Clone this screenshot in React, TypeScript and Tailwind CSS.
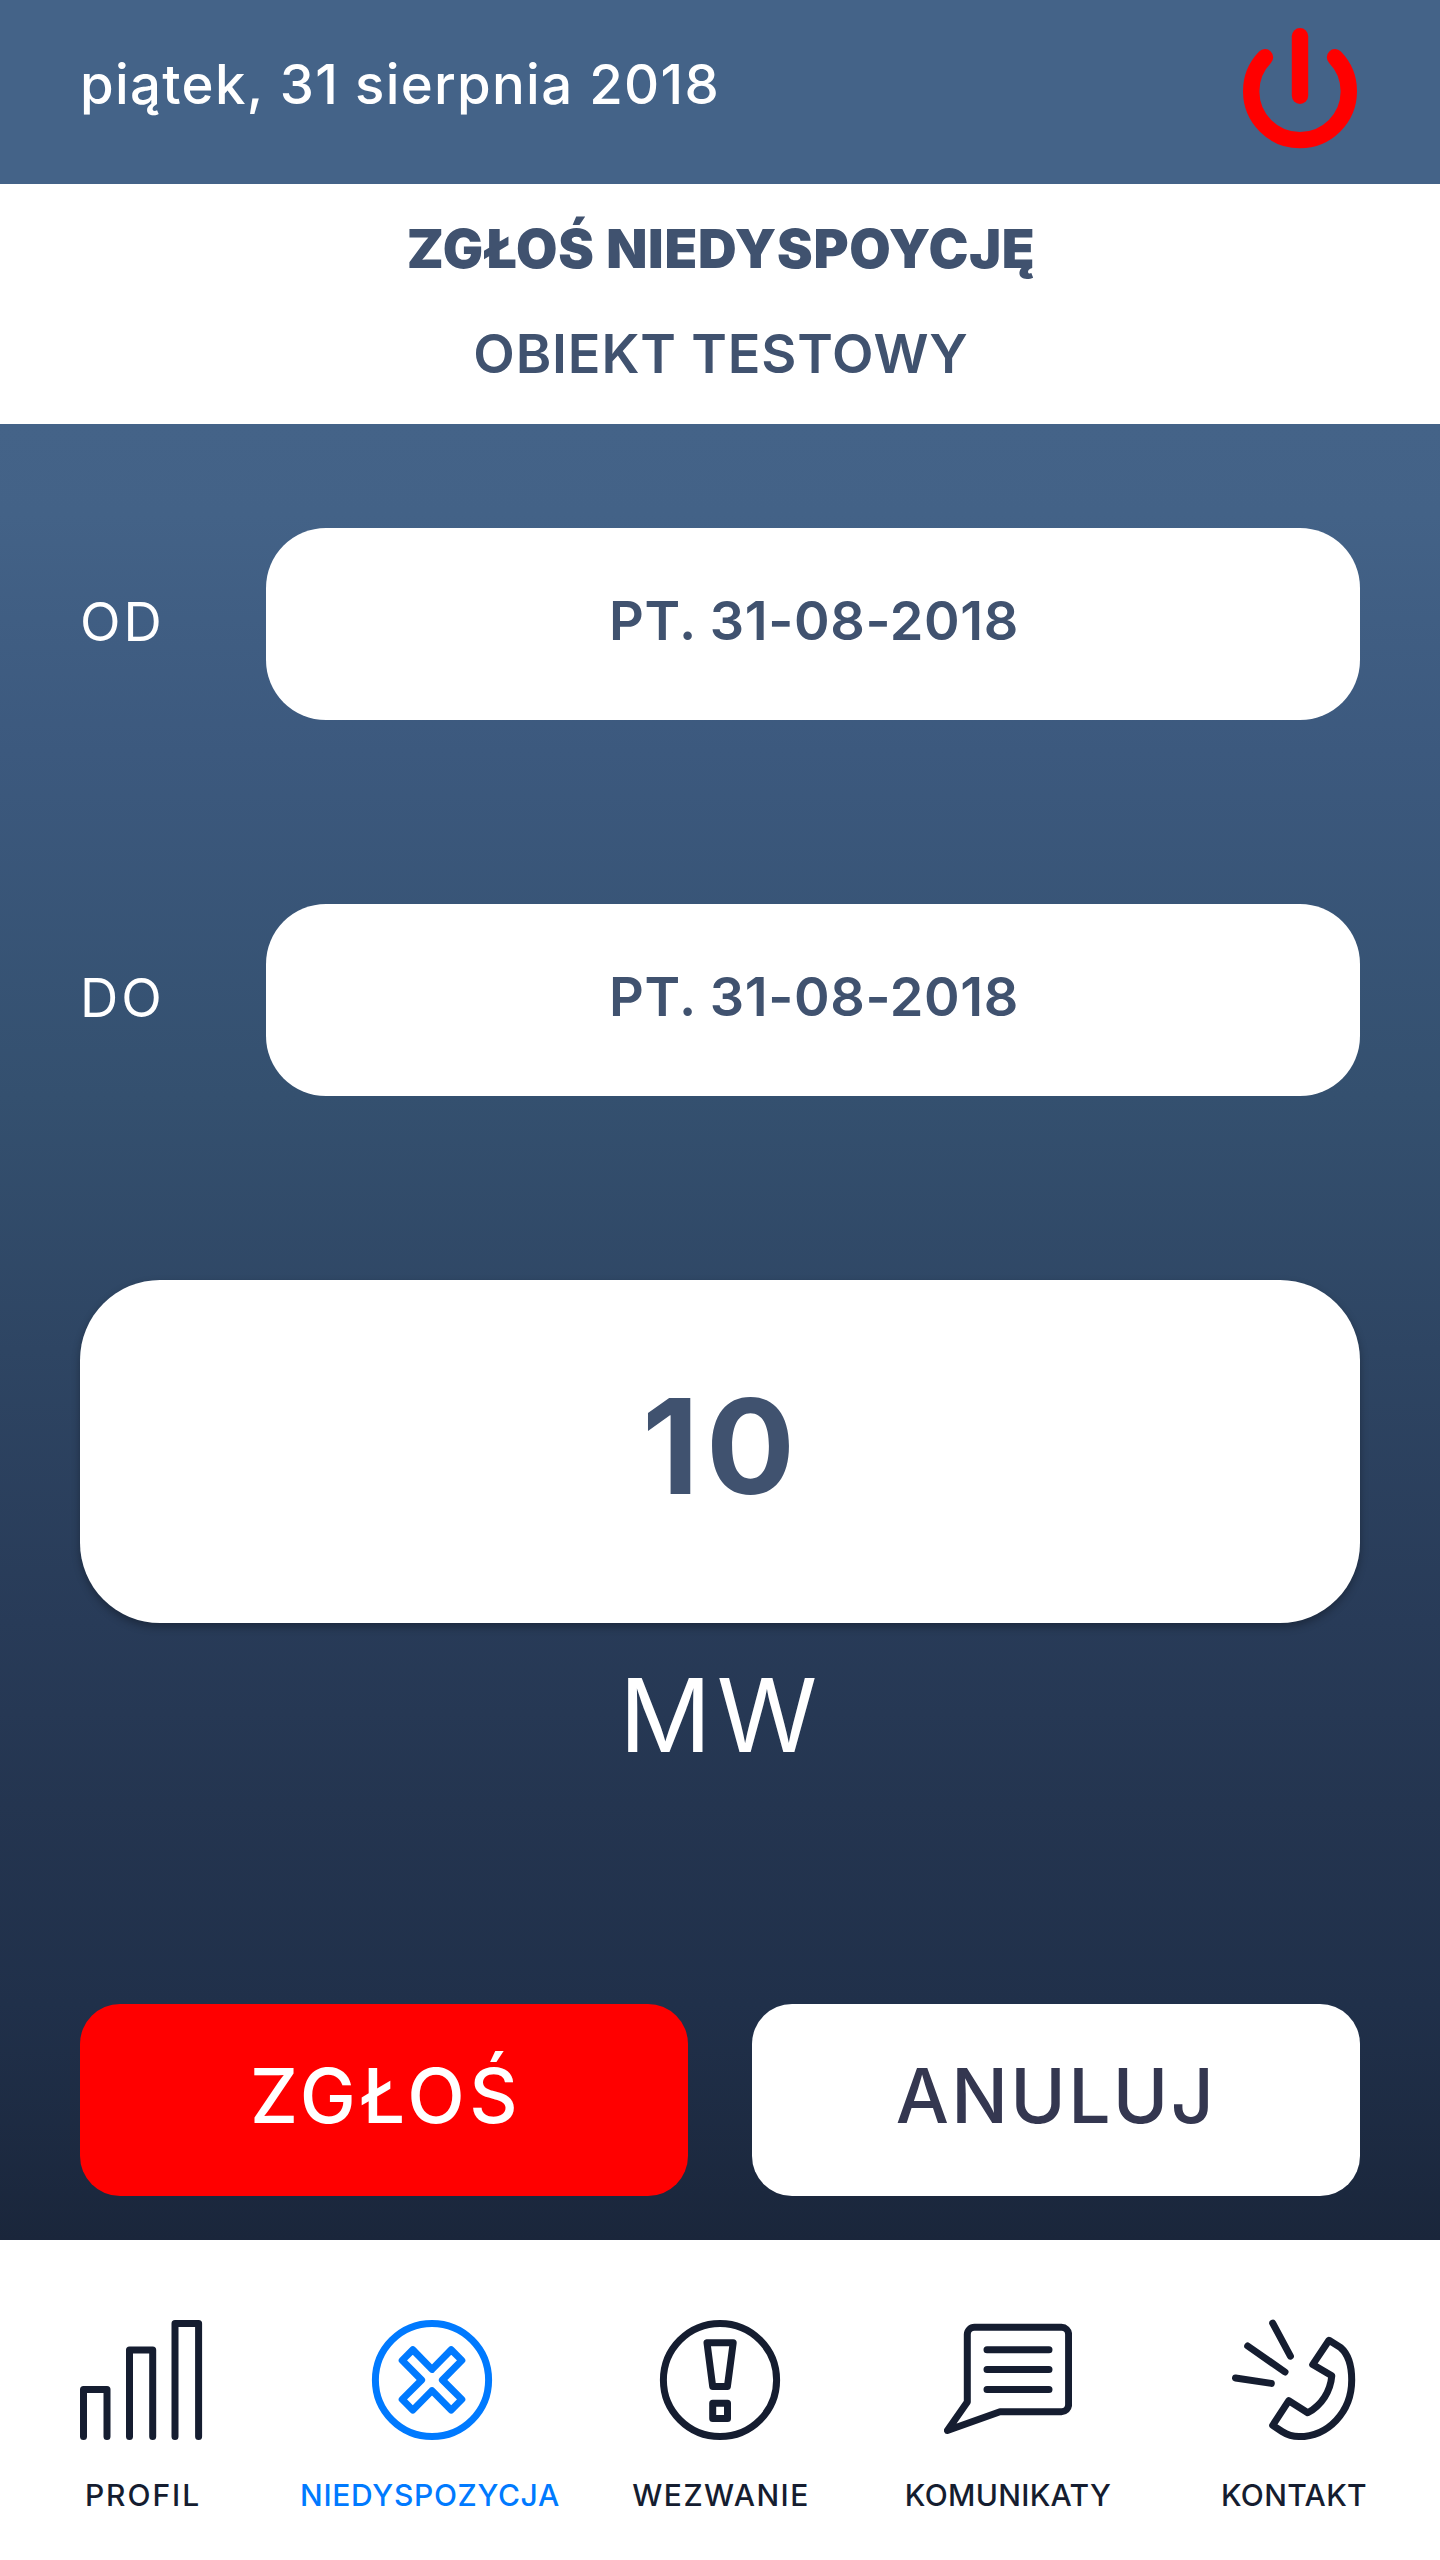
import React, { useState } from 'react';

const ICON_PROPS = {
    viewBox: '0 0 128 128',
    fill: 'none',
    stroke: 'currentColor',
    strokeWidth: 7,
    strokeLinecap: 'round' as const,
    strokeLinejoin: 'round' as const,
    className: 'w-32 h-32',
};

const PowerIcon: React.FC = () => (
    <svg viewBox="0 0 120 120" className="w-[120px] h-[120px] overflow-visible" fill="none" stroke="#ff0000" strokeWidth={16.4} strokeLinecap="round">
        <path d="M25 32.3A48.8 48.8 0 1 0 95 32.3" />
        <path d="M60 11.2V70.8" />
    </svg>
);

const ProfileIcon: React.FC = () => (
    <svg {...ICON_PROPS}>
        <path d="M3.5 120.5V73.6H27V120.5" />
        <path d="M49.5 120.5V34H72.7V120.5" />
        <path d="M95 120.5V7.5H118.6V120.5" />
    </svg>
);

const UnavailableIcon: React.FC = () => (
    <svg {...ICON_PROPS}>
        <circle cx="64" cy="64" r="56.6" />
        <path d="M44.8 33.7L64 53.4L83.2 33.7L93.8 44.4L74.4 64L93.8 83.4L83.2 94.1L64 74.6L44.8 94.1L34.2 83.4L53.6 64L34.2 44.4Z" />
    </svg>
);

const CallIcon: React.FC = () => (
    <svg {...ICON_PROPS}>
        <circle cx="64" cy="64" r="56.6" />
        <path d="M51 26.7H77.2L71.4 70.5H56.7Z" />
        <path d="M56.7 87.2H71.5V102.4H56.7Z" />
    </svg>
);

const MessagesIcon: React.FC = () => (
    <svg {...ICON_PROPS}>
        <path d="M23.3 86V18.5A7.2 7.2 0 0 1 30.5 11.3H117.5A7.2 7.2 0 0 1 124.6 18.5V88.5A7.2 7.2 0 0 1 117.5 95.7H56L3.4 114.5Z" />
        <path d="M43 33.7H105M43 53.5H105M43 73.4H105" />
    </svg>
);

const ContactIcon: React.FC = () => (
    <svg {...ICON_PROPS}>
        <path d="M40.7 7.2L58.4 40.2M15.7 30L53 56M3.5 62L39.3 67.4" />
        <path d="M97 24.3L80.7 48.6L99.8 59.8C98.5 75 90 89 75.7 96.8L56.8 84.7L40.7 109.3L50 115.5C55.5 119 61 120.6 67 120.6C96 120.6 119.7 96 119.7 64C119.7 49 115.5 37.5 108.5 31.5Z" />
    </svg>
);

const TABS = [
    { id: 'profil', label: 'PROFIL', Icon: ProfileIcon, spacing: 'tracking-[1.94px] pr-0.5' },
    { id: 'niedyspozycja', label: 'NIEDYSPOZYCJA', Icon: UnavailableIcon, spacing: 'tracking-[0.68px] pr-1' },
    { id: 'wezwanie', label: 'WEZWANIE', Icon: CallIcon, spacing: 'tracking-[1.43px] pl-0.5' },
    { id: 'komunikaty', label: 'KOMUNIKATY', Icon: MessagesIcon, spacing: 'tracking-[0.3px]' },
    { id: 'kontakt', label: 'KONTAKT', Icon: ContactIcon, spacing: 'tracking-[0.33px] pr-1' },
];

const DateField: React.FC<{ label: string; value: string }> = ({ label, value }) => (
    <div className="flex h-48">
        <span className="w-[186px] flex items-center pb-[3px] text-[53px] font-normal tracking-[3px] text-white">
            {label}
        </span>
        <button className="flex-1 flex items-center justify-center pl-0.5 pb-2 rounded-[60px] bg-white text-[54px] font-semibold tracking-[0.62px] text-[#40526f]">
            {value}
        </button>
    </div>
);

const App: React.FC = () => {
    const [active, setActive] = useState('niedyspozycja');

    return (
        <div className="w-[1440px] h-[2560px] flex flex-col overflow-hidden font-['Inter',sans-serif] whitespace-nowrap">
            <header className="h-[184px] flex items-center justify-between px-20 pb-3.5 bg-[#446388]">
                <span className="text-[54.5px] font-medium tracking-[1.3px] text-white">piątek, 31 sierpnia 2018</span>
                <button aria-label="Wyloguj">
                    <PowerIcon />
                </button>
            </header>

            <div className="h-60 pt-3 bg-white text-center leading-[105px] text-[#40526f]">
                <h1 className="text-[53.5px] font-black tracking-[0.78px] pl-0.5">ZGŁOŚ NIEDYSPOYCJĘ</h1>
                <h2 className="text-[54px] font-semibold tracking-[0.84px] pl-0.5">OBIEKT TESTOWY</h2>
            </div>

            <main className="flex-1 flex flex-col px-20 pt-[104px] bg-[linear-gradient(to_bottom,#446388_0%,#436287_5%,#3c597e_18%,#34506f_37%,#2e4563_51%,#283b58_66%,#243550_76%,#20304a_87%,#1a263b_100%)]">
                <div className="flex flex-col gap-[184px]">
                    <DateField label="OD" value="PT. 31-08-2018" />
                    <DateField label="DO" value="PT. 31-08-2018" />
                </div>

                {/* Power value */}
                <div className="mt-[184px] h-[343px] flex items-center justify-center pl-1 pb-[11px] rounded-[80px] bg-white shadow-[0_4px_8px_rgba(0,0,0,0.3)] text-[132px] font-bold tracking-[7px] text-[#40526f]">
                    10
                </div>
                <p className="pl-0.5 text-center text-[102px] leading-[184px] font-normal tracking-[5.5px] text-white">MW</p>

                <div className="mt-[197px] grid grid-cols-2 gap-16 text-[75px] font-medium">
                    <button className="h-48 flex items-center justify-center pl-1 pb-[7px] rounded-[40px] bg-[#ff0000] tracking-[4.35px] text-white">
                        ZGŁOŚ
                    </button>
                    <button className="h-48 flex items-center justify-center pb-[7px] rounded-[40px] bg-white tracking-[2.3px] text-[#343750]">
                        ANULUJ
                    </button>
                </div>
            </main>

            <nav className="h-80 pt-[76px] grid grid-cols-5 items-start bg-white">
                {TABS.map(({ id, label, Icon, spacing }) => (
                    <button
                        key={id}
                        onClick={() => setActive(id)}
                        className={`flex flex-col items-center ${active === id ? 'text-[#007aff]' : 'text-[#151d30]'}`}
                    >
                        <Icon />
                        <span className={`mt-[31px] text-[30px] leading-10 font-medium ${spacing}`}>{label}</span>
                    </button>
                ))}
            </nav>
        </div>
    );
};

export default App;
